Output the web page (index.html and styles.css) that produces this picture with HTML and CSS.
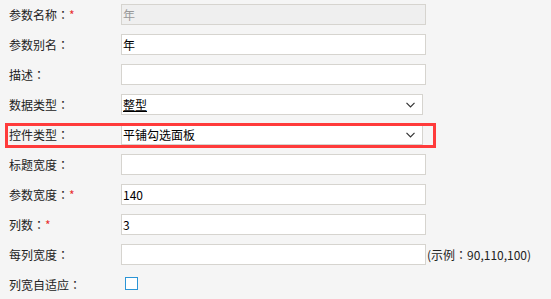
FILE: index.html
```html
<!DOCTYPE html>
<html lang="zh-CN">
<head>
    <meta charset="UTF-8">
    <link rel="stylesheet" href="styles.css">
    <title>参数设置</title>
</head>
<body>
    <div class="form">
        <div class="row">
            <label class="lbl">参数名称<span class="colon" lang="ja">：</span><span class="req">*</span></label>
            <div class="field disabled">年</div>
        </div>
        <div class="row">
            <label class="lbl">参数别名<span class="colon" lang="ja">：</span></label>
            <div class="field">年</div>
        </div>
        <div class="row">
            <label class="lbl">描述<span class="colon" lang="ja">：</span></label>
            <div class="field"></div>
        </div>
        <div class="row">
            <label class="lbl">数据类型<span class="colon" lang="ja">：</span></label>
            <div class="field select">
                <span class="sel-text under">整型</span>
                <svg class="arrow" width="9" height="6" viewBox="0 0 9 6"><path d="M0.5 0.8 L4.5 4.8 L8.5 0.8" fill="none" stroke="#333" stroke-width="1.2"/></svg>
            </div>
        </div>
        <div class="row mark">
            <label class="lbl">控件类型<span class="colon" lang="ja">：</span></label>
            <div class="field select">
                <span class="sel-text">平铺勾选面板</span>
                <svg class="arrow" width="9" height="6" viewBox="0 0 9 6"><path d="M0.5 0.8 L4.5 4.8 L8.5 0.8" fill="none" stroke="#333" stroke-width="1.2"/></svg>
            </div>
        </div>
        <div class="row">
            <label class="lbl">标题宽度<span class="colon" lang="ja">：</span></label>
            <div class="field"></div>
        </div>
        <div class="row">
            <label class="lbl">参数宽度<span class="colon" lang="ja">：</span><span class="req">*</span></label>
            <div class="field">140</div>
        </div>
        <div class="row">
            <label class="lbl">列数<span class="colon" lang="ja">：</span><span class="req">*</span></label>
            <div class="field">3</div>
        </div>
        <div class="row">
            <label class="lbl">每列宽度<span class="colon" lang="ja">：</span></label>
            <div class="field"></div>
            <span class="hint">(示例<span class="colon" lang="ja">：</span>90,110,100)</span>
        </div>
        <div class="row">
            <label class="lbl">列宽自适应<span class="colon" lang="ja">：</span></label>
            <div class="check"></div>
        </div>
    </div>
</body>
</html>
```

FILE: styles.css
```css
body{
    margin: 0;
    padding: 0;
    background: #f5f5f5;
    font-family: "Noto Sans CJK SC", "Noto Sans", sans-serif;
    font-size: 12px;
    color: #222;
}
.form{
    padding: 4px 0 0 9px;
}
.row{
    display: flex;
    align-items: flex-start;
    height: 30px;
    position: relative;
}
.lbl{
    width: 112px;
    line-height: 21px;
    flex: none;
}
.colon{
    font-family: "Noto Sans CJK JP", sans-serif;
}
.req{
    color: #e8302f;
}
.field{
    box-sizing: border-box;
    width: 305px;
    height: 21px;
    line-height: 19px;
    border: 1px solid #d6d4cf;
    background: #fff;
    padding-left: 1px;
    color: #000;
    flex: none;
}
.field.disabled{
    background: #efefef;
    color: #999;
}
.select{
    width: 302px;
    display: flex;
    justify-content: space-between;
    align-items: center;
    padding-right: 7px;
}
.under{
    text-decoration: underline;
}
.arrow{
    display: block;
}
.hint{
    line-height: 21px;
    margin-left: 1px;
    color: #222;
}
.check{
    box-sizing: border-box;
    width: 13px;
    height: 13px;
    margin: 3px 0 0 4px;
    border: 1px solid #2b95d6;
    background: #fff;
}
.mark::after{
    content: "";
    position: absolute;
    left: -4px;
    top: -1px;
    width: 431px;
    height: 25px;
    box-sizing: border-box;
    border: 3px solid #ff3b3b;
}
```
